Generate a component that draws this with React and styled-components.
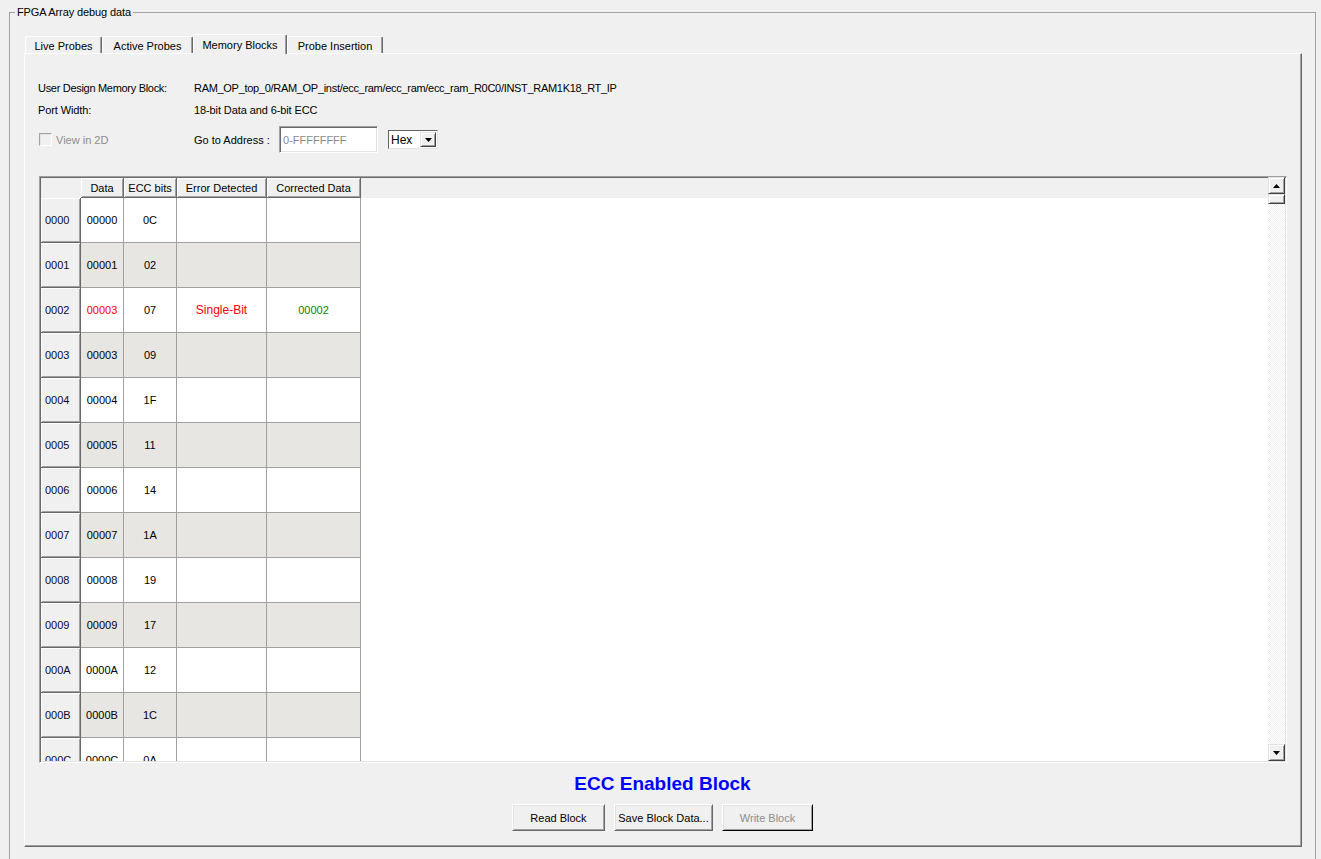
import React from "react";
import styled, { createGlobalStyle } from "styled-components";

const GlobalStyle = createGlobalStyle`
  html, body { margin: 0; padding: 0; background: #f0f0f0; overflow: hidden; }
  body {
    font-family: "Liberation Sans", Arial, sans-serif;
    font-size: 11px;
    color: #000;
  }
  #root { width: 1321px; height: 859px; overflow: hidden; }
  * { box-sizing: border-box; }
`;

const Page = styled.div`
  padding: 6px 5px 0 9px;
  height: 859px;
`;

const GroupBox = styled.fieldset`
  margin: 0;
  padding: 0;
  min-width: 0;
  height: 900px;
  border: 1px solid #a0a0a0;
`;

const Legend = styled.legend`
  margin-left: 5px;
  padding: 0 2px;
  line-height: 13px;
  font-size: 11px;
  letter-spacing: -0.1px;
`;

const GroupInner = styled.div`
  padding: 15px 13px 0 14px;
`;

const TabStrip = styled.div`
  display: flex;
  align-items: flex-end;
  height: 19px;
  padding-left: 1px;
  position: relative;
  z-index: 2;
`;

const Tab = styled.div`
  width: ${(p) => p.$w}px;
  height: ${(p) => (p.$active ? 20 : 17)}px;
  margin-bottom: ${(p) => (p.$active ? -1 : 0)}px;
  background: #f0f0f0;
  border-top: 1px solid #fff;
  border-left: 1px solid #fff;
  border-right: 1px solid #696969;
  box-shadow: inset -1px 0 0 #a0a0a0;
  border-radius: 2px 2px 0 0;
  display: flex;
  align-items: center;
  justify-content: center;
  padding-top: ${(p) => (p.$active ? 0 : 2)}px;
  white-space: nowrap;
`;

const Panel = styled.div`
  height: 794px;
  background: #f0f0f0;
  border-top: 1px solid #fff;
  border-left: 1px solid #fff;
  border-right: 1px solid #696969;
  border-bottom: 1px solid #696969;
  box-shadow: inset -1px -1px 0 #a0a0a0;
  padding: 0 14px 0 13px;
  display: flex;
  flex-direction: column;
`;

const InfoGrid = styled.div`
  display: grid;
  grid-template-columns: 156px 1fr;
  grid-template-rows: 22px 23px 27px;
  align-items: start;
  padding-top: 27px;
  line-height: 14px;
`;

const InfoText = styled.div`
  white-space: nowrap;
  letter-spacing: ${(p) => (p.$tight ? "-0.3px" : "-0.1px")};
`;

const ControlCell = styled.div`
  display: flex;
  align-items: center;
  height: 27px;
  padding-left: ${(p) => p.$indent || 0}px;
`;

const CheckBox = styled.span`
  width: 13px;
  height: 13px;
  background: #f0f0f0;
  border-top: 1px solid #a0a0a0;
  border-left: 1px solid #a0a0a0;
  border-right: 1px solid #fff;
  border-bottom: 1px solid #fff;
  box-shadow: inset 1px 1px 0 #e3e3e3;
  margin-right: 4px;
  flex: none;
`;

const DisabledText = styled.span`
  color: #8d8d8d;
`;

const FieldLabel = styled.span`
  width: 85px;
  flex: none;
  white-space: nowrap;
`;

const AddressInput = styled.input`
  width: 99px;
  height: 27px;
  margin: 0 10px 0 0;
  padding: 0 0 0 3px;
  font: inherit;
  background: #fff;
  border-top: 1px solid #a0a0a0;
  border-left: 1px solid #a0a0a0;
  border-right: 1px solid #fff;
  border-bottom: 1px solid #fff;
  box-shadow: inset 1px 1px 0 #696969, inset -1px -1px 0 #e3e3e3;
  outline: none;
  &::placeholder { color: #8a8a8a; opacity: 1; }
`;

const SelectBox = styled.div`
  width: 50px;
  height: 19px;
  background: #fff;
  border-top: 1px solid #646464;
  border-left: 1px solid #646464;
  border-right: 1px solid #e3e3e3;
  border-bottom: 1px solid #e3e3e3;
  display: flex;
  align-items: center;
  justify-content: space-between;
  padding: 0 1px 0 2px;
  font-size: 12px;
`;

const RaisedButton = styled.div`
  width: ${(p) => p.$w}px;
  height: ${(p) => p.$h}px;
  flex: none;
  background: #f0f0f0;
  border-top: 1px solid #e3e3e3;
  border-left: 1px solid #e3e3e3;
  border-right: 1px solid #404040;
  border-bottom: 1px solid #404040;
  box-shadow: inset 1px 1px 0 #fff, inset -1px -1px 0 #a0a0a0;
  display: flex;
  align-items: center;
  justify-content: center;
`;

const TableFrame = styled.div`
  margin: 23px 0 0 1px;
  height: 587px;
  display: flex;
  background: #fff;
  border-top: 1px solid #a0a0a0;
  border-left: 1px solid #a0a0a0;
  border-right: 1px solid #fff;
  border-bottom: 1px solid #fff;
  box-shadow: inset 1px 1px 0 #696969, inset -1px -1px 0 #e3e3e3;
  padding: 1px;
`;

const GridArea = styled.div`
  flex: 1;
  overflow: hidden;
  background: #fff;
`;

const HeaderRow = styled.div`
  display: flex;
  height: 20px;
  background: #f0f0f0;
`;

const Corner = styled.div`
  width: 40px;
  flex: none;
`;

const HeaderCell = styled.div`
  width: ${(p) => p.$w}px;
  flex: none;
  border-right: 1px solid #696969;
  border-bottom: 1px solid #696969;
  box-shadow: inset 1px 1px 0 #fff, inset -1px -1px 0 #a0a0a0;
  display: flex;
  align-items: center;
  justify-content: center;
  white-space: nowrap;
`;

const Row = styled.div`
  display: flex;
  height: 45px;
`;

const RowHeader = styled.div`
  width: 40px;
  flex: none;
  background: #f0f0f0;
  border-right: 1px solid #696969;
  border-bottom: 1px solid #696969;
  box-shadow: inset 1px 1px 0 #fff, inset -1px -1px 0 #a0a0a0;
  display: flex;
  align-items: center;
  padding-left: 4px;
  color: #0a0a28;
`;

const Cell = styled.div`
  width: ${(p) => p.$w}px;
  flex: none;
  background: ${(p) => (p.$shade ? "#e8e6e3" : "#fff")};
  border-right: 1px solid #a0a0a0;
  border-bottom: 1px solid #a0a0a0;
  display: flex;
  align-items: center;
  justify-content: center;
  color: ${(p) => p.$color || "#000"};
  font-size: ${(p) => p.$size || 11}px;
  white-space: nowrap;
`;

const ScrollBar = styled.div`
  width: 17px;
  flex: none;
  display: flex;
  flex-direction: column;
  margin: -1px 0 0 0;
  background: repeating-conic-gradient(#f0f0f0 0 25%, #fff 0 50%) 0 0 / 2px 2px;
`;

const ScrollSpacer = styled.div`
  flex: 1;
`;

const Title = styled.div`
  margin-top: 11px;
  text-align: center;
  font-size: 19px;
  line-height: 20px;
  font-weight: bold;
  color: #0000ff;
`;

const ButtonRow = styled.div`
  margin-top: 10px;
  display: flex;
  justify-content: center;
  gap: 9px;
`;

const PushButton = styled.div`
  width: ${(p) => p.$w}px;
  height: 27px;
  background: #f0f0f0;
  border-top: 1px solid #fff;
  border-left: 1px solid #fff;
  border-right: 1px solid ${(p) => (p.$dark ? "#000" : "#696969")};
  border-bottom: 1px solid ${(p) => (p.$dark ? "#000" : "#696969")};
  box-shadow: inset 1px 1px 0 #e3e3e3, inset -1px -1px 0 #a0a0a0;
  display: flex;
  align-items: center;
  justify-content: center;
  color: ${(p) => (p.$disabled ? "#8d8d8d" : "#000")};
  white-space: nowrap;
`;

const Arrow = ({ dir }) => (
  <svg width="7" height="4" viewBox="0 0 7 4">
    {dir === "up" ? (
      <polygon points="3.5,0 7,4 0,4" fill="#000" />
    ) : (
      <polygon points="0,0 7,0 3.5,4" fill="#000" />
    )}
  </svg>
);

const COLS = [43, 53, 90, 94];

const rows = [
  ["0000", "00000", "0C"],
  ["0001", "00001", "02"],
  ["0002", "00003", "07", "Single-Bit", "00002", true],
  ["0003", "00003", "09"],
  ["0004", "00004", "1F"],
  ["0005", "00005", "11"],
  ["0006", "00006", "14"],
  ["0007", "00007", "1A"],
  ["0008", "00008", "19"],
  ["0009", "00009", "17"],
  ["000A", "0000A", "12"],
  ["000B", "0000B", "1C"],
  ["000C", "0000C", "0A"],
];

export default function App() {
  return (
    <>
      <GlobalStyle />
      <Page>
        <GroupBox>
          <Legend>FPGA Array debug data</Legend>
          <GroupInner>
            <TabStrip>
              <Tab $w={77}>Live Probes</Tab>
              <Tab $w={91}>Active Probes</Tab>
              <Tab $w={94} $active>Memory Blocks</Tab>
              <Tab $w={96}>Probe Insertion</Tab>
            </TabStrip>
            <Panel>
              <InfoGrid>
                <InfoText $tight>User Design Memory Block:</InfoText>
                <InfoText $tight>RAM_OP_top_0/RAM_OP_inst/ecc_ram/ecc_ram/ecc_ram_R0C0/INST_RAM1K18_RT_IP</InfoText>
                <InfoText>Port Width:</InfoText>
                <InfoText>18-bit Data and 6-bit ECC</InfoText>
                <ControlCell $indent={1}>
                  <CheckBox />
                  <DisabledText>View in 2D</DisabledText>
                </ControlCell>
                <ControlCell>
                  <FieldLabel>Go to Address :</FieldLabel>
                  <AddressInput placeholder="0-FFFFFFFF" />
                  <SelectBox>
                    <span>Hex</span>
                    <RaisedButton $w={16} $h={15}>
                      <Arrow dir="down" />
                    </RaisedButton>
                  </SelectBox>
                </ControlCell>
              </InfoGrid>

              <TableFrame>
                <GridArea>
                  <HeaderRow>
                    <Corner />
                    <HeaderCell $w={COLS[0]}>Data</HeaderCell>
                    <HeaderCell $w={COLS[1]}>ECC bits</HeaderCell>
                    <HeaderCell $w={COLS[2]}>Error Detected</HeaderCell>
                    <HeaderCell $w={COLS[3]}>Corrected Data</HeaderCell>
                  </HeaderRow>
                  {rows.map((r, i) => {
                    const shade = i % 2 === 1;
                    return (
                      <Row key={r[0]}>
                        <RowHeader>{r[0]}</RowHeader>
                        <Cell $w={COLS[0]} $shade={shade} $color={r[5] ? "#ff0000" : undefined}>
                          {r[1]}
                        </Cell>
                        <Cell $w={COLS[1]} $shade={shade}>{r[2]}</Cell>
                        <Cell $w={COLS[2]} $shade={shade} $color="#ff0000" $size={12}>
                          {r[3] || ""}
                        </Cell>
                        <Cell $w={COLS[3]} $shade={shade} $color="#008c00">{r[4] || ""}</Cell>
                      </Row>
                    );
                  })}
                </GridArea>
                <ScrollBar>
                  <RaisedButton $w={17} $h={17}>
                    <Arrow dir="up" />
                  </RaisedButton>
                  <RaisedButton $w={17} $h={10} />
                  <ScrollSpacer />
                  <RaisedButton $w={17} $h={17}>
                    <Arrow dir="down" />
                  </RaisedButton>
                </ScrollBar>
              </TableFrame>

              <Title>ECC Enabled Block</Title>
              <ButtonRow>
                <PushButton $w={93}>Read Block</PushButton>
                <PushButton $w={99}>Save Block Data...</PushButton>
                <PushButton $w={91} $dark $disabled>Write Block</PushButton>
              </ButtonRow>
            </Panel>
          </GroupInner>
        </GroupBox>
      </Page>
    </>
  );
}
